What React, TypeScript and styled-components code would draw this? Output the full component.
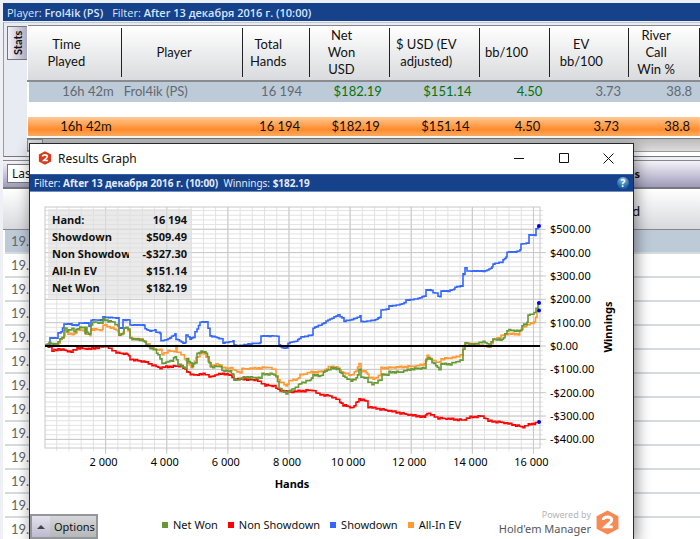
import React from "react";
import styled, { createGlobalStyle } from "styled-components";

const ui = '"Noto Sans", "Open Sans", sans-serif';
const uiStrong = '"Open Sans", "Noto Sans", sans-serif';
const humanist = 'Lato, "Open Sans", sans-serif';

const GlobalStyle = createGlobalStyle`
  *, *::before, *::after { box-sizing: border-box; }
  body { margin: 0; background: #eef0f5; font-family: ${ui}; color: #111; }
  button, select { font: inherit; color: inherit; }
`;

const Desktop = styled.div`
  position: relative;
  height: 100vh;
  overflow: hidden;
  padding: 3px 0 0 3px;
`;

const FilterBar = styled.header`
  display: flex;
  align-items: center;
  gap: 9px;
  height: 18px;
  padding-left: 4px;
  background: #16418b;
  color: #d9e6fa;
  font-family: ${uiStrong};
  font-size: 11px;
  white-space: pre;

  b { font-weight: 600; }
`;

const StatsPanel = styled.section`
  display: flex;
  height: 135px;
  margin-top: 1px;
  padding-top: 2px;
  border-left: 1px solid #9a9ca4;
  border-top: 1px solid #c3c6cd;
  border-bottom: 1px solid #74767c;
  background: #e8ebf2;
`;

const TabRail = styled.div`
  width: 23px;
  padding: 1px 0 0 3px;
`;

const StatsTab = styled.button`
  width: 20px;
  height: 34px;
  padding: 0;
  border: 1px solid #74747c;
  border-right: 0;
  background: linear-gradient(90deg, #f2f1f7, #aeacc4);
  font-family: ${humanist};
  font-size: 11px;
  font-weight: 700;
  writing-mode: vertical-rl;
  line-height: 18px;

  span { display: block; transform: rotate(180deg); }
`;

const TableArea = styled.div`
  flex: 1;
  background: #fff;
`;

const StatsTable = styled.table`
  width: 100%;
  table-layout: fixed;
  border-collapse: collapse;
  font-family: ${humanist};
  font-size: 13px;
  line-height: 17px;

  th, td { padding: 0; font-weight: 400; }
  thead { background: linear-gradient(#fff, #d9dadd); }
  thead tr { height: 55px; border-top: 1px solid #85878b; border-bottom: 2px solid #8a8b8e; }
`;

const HeadLabel = styled.div`
  display: flex;
  align-items: center;
  justify-content: center;
  height: 49px;
  padding-right: 16px;
  border-right: 1px solid #222;
  text-align: center;
  white-space: pre-line;
`;

const PlayerRow = styled.tr`
  height: 21px;
  border-left: 2px solid #fff;
  background: #bdcad8;
  color: #616970;
`;

const TotalRow = styled.tr`
  height: 19px;
  background: linear-gradient(#ffc995, #ff8c2c 65%, #ffad62);
  color: #111;
`;

const GapRow = styled.tr`
  height: 15px;
`;

const Cell = styled.td<{ $win?: boolean; $left?: boolean; $shift?: boolean }>`
  && { padding: ${(p) => (p.$left ? "0 0 0 2px" : p.$shift ? "0 10px 0 0" : "0 8px 0 0")}; }
  text-align: ${(p) => (p.$left ? "left" : "right")};
  color: ${(p) => (p.$win ? "#087308" : "inherit")};
  white-space: nowrap;
`;

const ScrollTrack = styled.div`
  height: 14px;
  margin-top: 2px;
  border-top: 1px solid #77787b;
  border-bottom: 1px solid #999;
  background: linear-gradient(#bbb, #ddd);
`;

const ScrollArrow = styled.button`
  display: block;
  width: 16px;
  height: 12px;
  padding: 0;
  border: 1px solid #888;
  background: #ddd;
  font-size: 8px;
  line-height: 8px;
`;

const ReportBar = styled.div`
  display: flex;
  align-items: center;
  justify-content: space-between;
  height: 29px;
  margin-top: 3px;
  padding: 0 60px 2px 4px;
  border-top: 1px solid #888;
  border-bottom: 2px solid #77787d;
  background: linear-gradient(#f4f3fa, #9f9bb9);
  font-size: 11px;
  font-weight: 700;
`;

const RangeSelect = styled.select`
  width: 90px;
  height: 19px;
  padding: 0 4px;
  border: 1px solid #777;
  border-radius: 0;
  background: #fff;
  appearance: none;
  font-size: 12px;
  font-weight: 400;
`;

const ListHead = styled.div`
  height: 41px;
  padding: 12px 60px 0 0;
  border-bottom: 1px solid #85878b;
  background: linear-gradient(#fff, #d8d9dd);
  text-align: right;
  font-family: ${humanist};
  font-size: 14px;
  line-height: 20px;
`;

const List = styled.ul`
  margin: 0;
  padding: 0 0 0 2px;
  list-style: none;
  background: #fff;
`;

const ListRow = styled.li<{ $selected?: boolean }>`
  height: 24px;
  padding-left: 6px;
  border-bottom: 2px solid #d6dbe0;
  background: ${(p) => (p.$selected ? "#bdcad8" : "#fff")};
  color: #62676c;
  font-family: ${humanist};
  font-size: 13px;
  line-height: 23px;
`;

const GraphWindow = styled.main`
  position: absolute;
  top: 143px;
  left: 29px;
  right: 66px;
  bottom: 0;
  display: flex;
  flex-direction: column;
  border: 1px solid #26292e;
  border-bottom: 0;
  background: #fff;
  box-shadow: 2px 4px 14px rgba(0, 0, 0, 0.45);
`;

const TitleBar = styled.div`
  display: flex;
  align-items: center;
  height: 30px;
  padding: 0 2px 2px 8px;
  font-size: 12px;

  h1 { flex: 1; margin: 0 0 0 6px; font: inherit; }
`;

const WindowButton = styled.button`
  display: flex;
  align-items: center;
  justify-content: center;
  width: 45px;
  height: 28px;
  padding: 0;
  border: 0;
  background: none;
`;

const WindowFilter = styled.div`
  display: flex;
  align-items: center;
  height: 18px;
  padding: 0 4px;
  border-top: 1px solid #3760a2;
  border-bottom: 1px solid #6f8dbf;
  background: #16418b;
  color: #e2ecfb;
  font-size: 10px;
  white-space: pre;
`;

const HelpButton = styled.button`
  width: 12px;
  height: 12px;
  margin-left: auto;
  padding: 0;
  border: 0;
  border-radius: 50%;
  background: radial-gradient(circle at 50% 20%, #8fc1e4, #1c66a5 70%);
  color: #fff;
  font-size: 10px;
  font-weight: 700;
  line-height: 12px;
`;

const ChartArea = styled.div`
  position: relative;

  svg { display: block; width: 100%; height: auto; }
`;

const Readout = styled.dl`
  position: absolute;
  top: 17px;
  left: 18px;
  width: 144px;
  margin: 0;
  padding: 2px 5px 2px 4px;
  background: rgba(222, 222, 222, 0.65);
  font-family: ${uiStrong};
  font-size: 11px;
  font-weight: 700;
  line-height: 17px;

  div { display: flex; justify-content: space-between; }
  dt { width: 77px; overflow: hidden; white-space: nowrap; }
  dd { margin: 0; white-space: nowrap; }
`;

const Footer = styled.footer`
  display: flex;
  align-items: flex-end;
  flex: 1;
  min-height: 0;
`;

const OptionsButton = styled.button`
  display: flex;
  align-items: center;
  width: 68px;
  height: 25px;
  padding: 0;
  border: 2px solid #94969a;
  background: linear-gradient(#d5d6d9, #b3b8b8);
  font-size: 11px;

  i {
    display: flex;
    align-items: center;
    justify-content: center;
    width: 18px;
    height: 21px;
    margin-right: 4px;
    background: linear-gradient(#e4e2ee, #bdb9d0);
  }
`;

const Legend = styled.ul`
  display: flex;
  gap: 10px;
  margin: 0 0 0 64px;
  padding: 0 0 5px;
  list-style: none;
  font-size: 11px;
  line-height: 18px;
  white-space: nowrap;
`;

const LegendItem = styled.li<{ $color: string }>`
  display: flex;
  align-items: center;
  gap: 5px;

  &::before {
    content: "";
    width: 6px;
    height: 6px;
    background: ${(p) => p.$color};
  }
`;

const Brand = styled.div`
  display: flex;
  align-items: center;
  gap: 4px;
  margin-left: auto;
  padding: 0 13px 3px 0;
  color: #55565a;
  font-size: 11px;
  line-height: 15px;
  text-align: right;
  white-space: nowrap;

  small { display: block; color: #b5b5b5; font-size: 9px; line-height: 12px; }
`;

const Hexagon = ({ size, color }: { size: number; color: string }) => (
  <svg width={size} height={size} viewBox="0 0 24 24" aria-hidden="true">
    <path d="M12 .5 22.5 6v12L12 23.5 1.5 18V6z" fill={color} strokeLinejoin="round" />
    <path d="M7.8 9.6C7.8 5.6 16 5.8 16 9.6c0 2.4-3.4 3.6-6.2 6.6H17" fill="none" stroke="#fff" strokeWidth="2.8" />
  </svg>
);

const columns: [string, number][] = [
  ["Time\nPlayed", 94], ["Player", 122], ["Total\nHands", 67], ["Net\nWon\nUSD", 80],
  ["$ USD (EV\nadjusted)", 90], ["bb/100", 71], ["EV\nbb/100", 79], ["River\nCall\nWin %", 71],
];
const columnTotal = columns.reduce((sum, c) => sum + c[1], 0);

const Col = styled.col<{ $share: number }>`
  width: ${(p) => p.$share * 100}%;
`;

const series: { name: string; color: string; points: string }[] = [
  { name: "All-In EV", color: "#ff9933", points: "45,346 52,344 57,345 60,340 64,336 65,331 68,334 74,334 77,330 85,330 86,334 90,335 91,329 102,330 103,325 107,326 112,328 118,331 119,336 123,333 124,327 128,330 130,338 143,340 150,346 156,350 160,350 162,354 168,351 174,351 176,346 177,352 183,355 186,361 191,367 196,358 202,352 206,357 210,366 218,364 224,368 231,368 235,371 240,372 242,369 260,368 268,367 274,370 278,380 286,386 289,381 297,379 300,375 311,372 318,372 325,370 330,366 338,368 343,373 351,375 356,371 359,363 361,371 366,372 369,377 373,379 380,375 381,368 400,367 416,366 424,364 427,356 434,361 438,363 441,359 456,357 462,354 463,347 466,343 489,347 493,340 505,334 518,334 523,327 534,322 537,311" },
  { name: "Non Showdown", color: "#ff0000", points: "45,346 50,347 52,351 58,349 64,350 71,352 77,348 90,349 105,346 112,350 118,353 127,354 130,359 145,362 150,364 160,368 164,367 175,366 181,366 185,370 192,375 205,374 211,377 217,374 228,374 234,379 245,379 256,380 265,385 274,386 278,390 290,392 300,391 312,390 318,394 330,396 338,400 343,405 350,407 352,408 356,403 359,399 366,401 368,407 380,409 400,413 410,415 424,417 427,413 438,418 450,419 463,420 470,417 482,416 488,421 500,422 510,424 523,427 530,424 537,423" },
  { name: "Showdown", color: "#3366ff", points: "45,345 49,345 50,338 56,338 58,333 61,332 64,324 71,324 72,325 78,325 79,323 88,323 89,326 91,326 91,320 102,320 103,317 118,318 119,328 122,328 123,320 129,320 130,325 144,325 145,329 150,331 155,330 156,332 160,333 161,341 168,339 175,334 176,339 183,343 185,343 186,335 190,339 193,337 195,332 197,329 200,322 206,322 208,328 210,336 215,337 221,339 223,343 233,341 234,345 238,346 248,344 260,343 261,336 277,336 279,345 282,348 286,348 288,343 296,341 301,337 312,335 313,328 320,325 328,320 332,318 338,315 342,318 344,321 350,320 359,317 360,316 361,321 363,322 367,321 375,320 378,318 381,316 381,310 388,309 389,306 398,305 406,302 406,300 416,299 424,296 426,290 431,290 433,293 437,293 438,296 440,297 441,291 448,291 454,289 455,287 462,286 463,274 464,274 465,268 467,271 485,271 489,269 492,267 493,264 501,262 503,260 506,257 507,252 515,252 520,250 521,244 528,243 529,235 535,235 536,229 538,226" },
  { name: "Net Won", color: "#669933", points: "45,346 49,342 53,346 58,342 60,338 62,338 64,330 65,328 67,331 72,329 74,331 78,328 85,327 85,334 86,327 87,333 90,334 91,324 94,322 102,323 103,319 108,321 113,322 115,324 118,326 119,336 121,333 123,334 124,327 128,329 130,338 132,339 143,340 146,345 150,348 155,350 158,355 160,358 162,364 168,361 172,361 175,356 178,364 183,367 185,368 187,359 192,366 195,362 197,354 201,351 206,353 209,362 211,367 220,366 222,371 230,371 233,375 234,380 240,379 245,377 260,378 262,374 272,374 276,376 279,388 282,391 286,393 292,389 297,387 300,383 310,380 313,375 320,376 325,371 331,368 338,369 343,376 351,381 356,378 359,370 361,377 366,378 368,382 372,384 380,380 382,374 387,375 389,372 400,372 411,369 424,368 426,360 428,357 434,364 439,369 441,364 450,364 458,361 462,360 463,350 465,342 469,345 477,343 485,342 489,346 493,339 502,340 505,334 507,330 520,331 522,325 527,323 528,315 534,313 536,308 538,303" },
];

const wobble = [0, 0.6, -0.5, 0.3, -0.8, 0.7, -0.2, 0.9, -0.6, 0.1];

/** Turns a list of points into a stair-stepped path with the small swings of single hands. */
function stepPath(points: string, rough: number) {
  const pts = points.split(" ").map((p) => p.split(",").map(Number));
  let d = `M${pts[0][0]} ${pts[0][1]}`;
  let n = 0;
  for (let i = 1; i < pts.length; i++) {
    const [x0, y0] = pts[i - 1];
    const [x1, y1] = pts[i];
    const steps = Math.max(1, Math.round((x1 - x0) / 2));
    for (let s = 1; s <= steps; s++) {
      const t = s / steps;
      const y = y0 + (y1 - y0) * t + wobble[n++ % wobble.length] * rough;
      d += `H${(x0 + (x1 - x0) * t).toFixed(1)}V${y.toFixed(1)}`;
    }
  }
  return d;
}

const money = [500, 400, 300, 200, 100, 0, -100, -200, -300, -400];
const minorY = Array.from({ length: 51 }, (_, i) => -420 + i * 20);
const minorX = Array.from({ length: 40 }, (_, i) => (i + 1) * 400);
const thousands = [2, 4, 6, 8, 10, 12, 14, 16];
const yAt = (v: number) => 346 - v * 0.2335;
const xAt = (v: number) => 44.5 + v * 0.03056;

const Chart = () => (
  <svg viewBox="30 192 603 304" role="img" aria-label="Winnings by hands" fontFamily={ui} fontSize="11">
    <g stroke="#e2e2e2">
      {minorY.map((v) => <line key={v} x1="45" x2="543" y1={yAt(v)} y2={yAt(v)} />)}
      {minorX.map((v) => <line key={v} x1={xAt(v)} x2={xAt(v)} y1="207" y2="451" />)}
    </g>
    <g stroke="#c8c8c8">
      {money.map((v) => <line key={v} x1="45" x2="546" y1={yAt(v)} y2={yAt(v)} />)}
      {thousands.map((v) => <line key={v} x1={xAt(v * 1000)} x2={xAt(v * 1000)} y1="207" y2="454" />)}
      <rect x="45" y="207" width="495" height="241" fill="none" />
    </g>
    <g fill="none" strokeWidth="1.6">
      {series.map((s) => (
        <path key={s.name} d={stepPath(s.points, s.name === "Showdown" ? 0.4 : 1)} stroke={s.color} />
      ))}
    </g>
    <line x1="45" x2="540" y1="346" y2="346" stroke="#000" strokeWidth="2" />
    {[226, 303, 310.5, 422].map((y) => <circle key={y} cx="539" cy={y} r="2" fill="#0000e6" />)}
    {money.map((v) => (
      <text key={v} x="550" y={yAt(v) + 4}>{`${v < 0 ? "-" : ""}$${Math.abs(v)}.00`}</text>
    ))}
    {thousands.map((v) => (
      <text key={v} x={xAt(v * 1000) - 2} y="466" textAnchor="middle">{`${v} 000`}</text>
    ))}
    <text x="292" y="488" textAnchor="middle" fontWeight="700">Hands</text>
    <text transform="translate(612 327) rotate(-90)" textAnchor="middle" fontWeight="700">Winnings</text>
  </svg>
);

const readings = [
  ["Hand:", "16 194"], ["Showdown", "$509.49"], ["Non Showdown", "-$327.30"],
  ["All-In EV", "$151.14"], ["Net Won", "$182.19"],
];
const totals = ["16h 42m", "", "16 194", "$182.19", "$151.14", "4.50", "3.73", "38.8"];

export default function App() {
  return (
    <Desktop>
      <GlobalStyle />
      <FilterBar>
        <span>Player: <b>Frol4ik (PS)</b></span>
        <span>Filter: <b>After 13 декабря 2016 г. (10:00)</b></span>
      </FilterBar>
      <StatsPanel>
        <TabRail><StatsTab><span>Stats</span></StatsTab></TabRail>
        <TableArea>
          <StatsTable>
            <colgroup>{columns.map(([label, w]) => <Col key={label} $share={w / columnTotal} />)}</colgroup>
            <thead>
              <tr>{columns.map(([label]) => <th key={label} scope="col"><HeadLabel>{label}</HeadLabel></th>)}</tr>
            </thead>
            <tbody>
              <PlayerRow>
                {totals.map((v, i) => (
                  <Cell key={i} $left={i === 1} $win={i > 2 && i < 6}>{i === 1 ? "Frol4ik (PS)" : v}</Cell>
                ))}
              </PlayerRow>
              <GapRow />
              <TotalRow>{totals.map((v, i) => <Cell key={i} $shift>{v}</Cell>)}</TotalRow>
            </tbody>
          </StatsTable>
          <ScrollTrack><ScrollArrow aria-label="Scroll left">◂</ScrollArrow></ScrollTrack>
        </TableArea>
      </StatsPanel>
      <ReportBar>
        <RangeSelect aria-label="Range"><option>Las</option></RangeSelect>
        <span>s</span>
      </ReportBar>
      <ListHead>d</ListHead>
      <List>
        {Array.from({ length: 13 }, (_, i) => <ListRow key={i} $selected={i === 0}>19.</ListRow>)}
      </List>

      <GraphWindow>
        <TitleBar>
          <Hexagon size={14} color="#d93a1c" />
          <h1>Results Graph</h1>
          <WindowButton aria-label="Minimize">
            <svg width="10" height="10"><path d="M0 5.5h10" stroke="#111" /></svg>
          </WindowButton>
          <WindowButton aria-label="Maximize">
            <svg width="10" height="10"><path d="M.5.5h9v9h-9z" fill="none" stroke="#111" /></svg>
          </WindowButton>
          <WindowButton aria-label="Close">
            <svg width="11" height="11"><path d="m.5.5 10 10m0-10-10 10" stroke="#111" /></svg>
          </WindowButton>
        </TitleBar>
        <WindowFilter>
          <span>Filter: <b>After 13 декабря 2016 г. (10:00)</b>  Winnings: <b>$182.19</b></span>
          <HelpButton aria-label="Help">?</HelpButton>
        </WindowFilter>
        <ChartArea>
          <Chart />
          <Readout>
            {readings.map(([k, v]) => <div key={k}><dt>{k}</dt><dd>{v}</dd></div>)}
          </Readout>
        </ChartArea>
        <Footer>
          <OptionsButton>
            <i><svg width="8" height="4"><path d="M4 0 8 4H0z" fill="#444" /></svg></i>Options
          </OptionsButton>
          <Legend>
            <LegendItem $color="#669933">Net Won</LegendItem>
            <LegendItem $color="#ff0000">Non Showdown</LegendItem>
            <LegendItem $color="#3366ff">Showdown</LegendItem>
            <LegendItem $color="#ff9933">All-In EV</LegendItem>
          </Legend>
          <Brand>
            <span><small>Powered by</small>Hold'em Manager</span>
            <Hexagon size={25} color="#f58a55" />
          </Brand>
        </Footer>
      </GraphWindow>
    </Desktop>
  );
}
